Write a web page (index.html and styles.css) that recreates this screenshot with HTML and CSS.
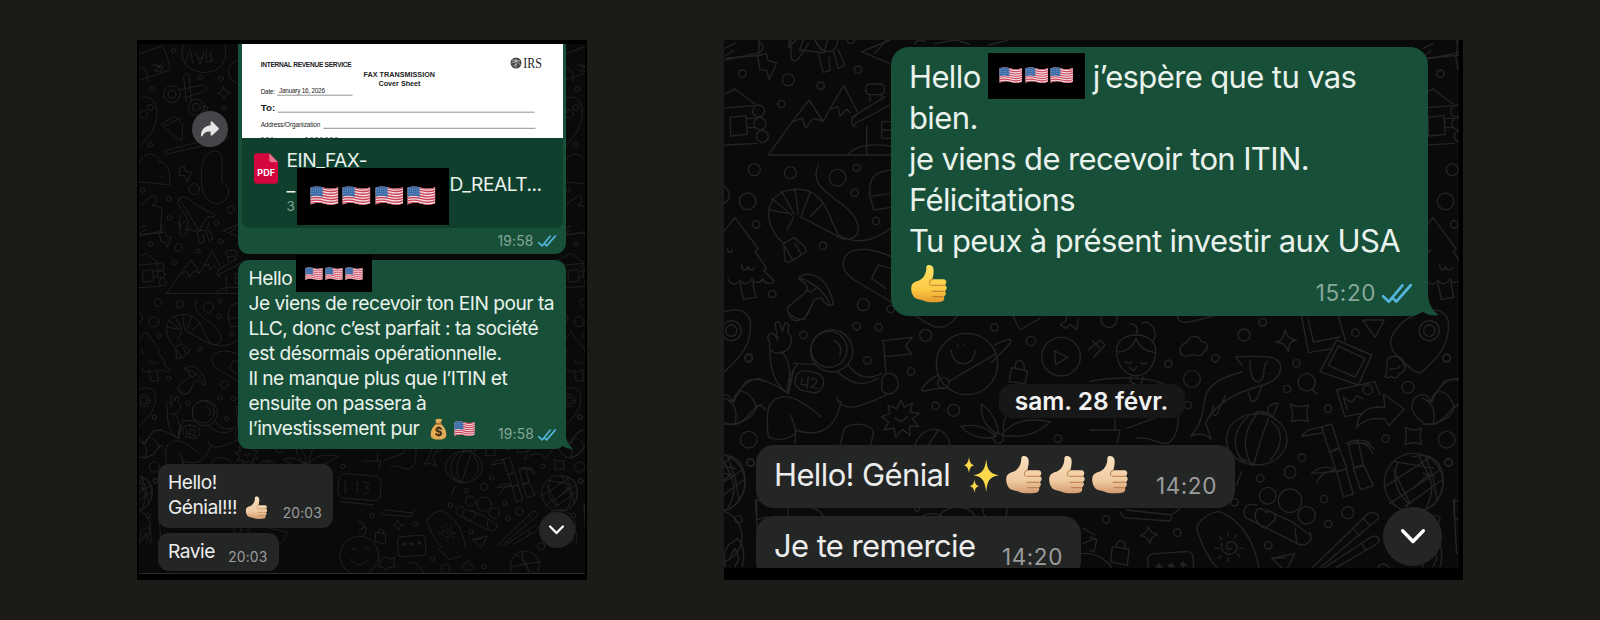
FILE: index.html
```html
<!DOCTYPE html>
<html lang="fr">
<head>
  <meta charset="UTF-8" />
  <meta name="viewport" content="width=device-width, initial-scale=1.0"/>
  <title>Témoignages</title>
  <link rel="stylesheet" href="styles.css">
</head>
<body>

  <!-- Shared shapes -->
  <svg class="defs" width="0" height="0">
    <defs>
      <linearGradient id="yellow" x1="0" y1="0" x2="0" y2="1">
        <stop offset="0" stop-color="#ffe066"/><stop offset=".65" stop-color="#fccb45"/><stop offset="1" stop-color="#e39a2c"/>
      </linearGradient>
      <linearGradient id="skin" x1="0" y1="0" x2="0" y2="1">
        <stop offset="0" stop-color="#fae0bd"/><stop offset=".65" stop-color="#f0cba2"/><stop offset="1" stop-color="#d39b70"/>
      </linearGradient>
      <symbol id="thumb" viewBox="0 0 112 120">
        <path d="M48 8c2-8 18-7 21 4 3 12-1 24-3 34l34 0c10 1 10 14 3 17 8 3 8 15 0 18 6 4 4 14-3 17 4 5 1 14-8 15-18 3-40 3-52-3-12-5-25-3-31-14C1 84 0 63 9 57c9-6 15-5 23-11 11-9 17-23 16-38z"/>
        <path d="M66 46c-8 2-11 9-7 16M64 64h38M65 82h36M68 98h29" fill="none" stroke="#a8632f" stroke-opacity=".6" stroke-width="3.5" stroke-linecap="round"/>
      </symbol>
      <symbol id="flag" viewBox="0 0 86 60" preserveAspectRatio="none">
        <clipPath id="wave"><path d="M1 5c14-6 28-4 42 0s28 4 42-2v49c-14 6-28 5-42 1s-28-3-42 3z"/></clipPath>
        <g clip-path="url(#wave)">
          <path fill="#f3e0e4" d="M0 0h86v60H0z"/>
          <path d="M0 6c14-6 28-4 43 0s29 4 43-2M0 14c14-6 28-4 43 0s29 4 43-2M0 22c14-6 28-4 43 0s29 4 43-2M0 30c14-6 28-4 43 0s29 4 43-2M0 38c14-6 28-4 43 0s29 4 43-2M0 46c14-6 28-4 43 0s29 4 43-2M0 54c14-6 28-4 43 0s29 4 43-2" fill="none" stroke="#cf4358" stroke-width="4.2"/>
          <path fill="#3d6da8" d="M0 0h38v33c-14-5-26-4-38 0z"/>
          <path d="M4 9h32M4 16h32M4 23h32" stroke="#a9c3de" stroke-width="2" stroke-dasharray="2 4"/>
        </g>
      </symbol>
      <symbol id="bag" viewBox="0 0 50 64">
        <path fill="#e3ab55" d="M15 3c5 3 8-3 11 0 4-3 6 2 10 0l-5 13c10 8 17 19 17 32 0 12-9 15-23 15S2 60 2 48c0-13 7-24 17-32z"/>
        <path stroke="#8d5c22" stroke-width="4" stroke-linecap="round" d="M17 17h16"/>
        <text x="25" y="54" text-anchor="middle" class="dollar">$</text>
      </symbol>
      <symbol id="sparkles" viewBox="0 0 104 106">
        <g fill="#fcd94a">
          <path d="M66 6c3 30 8 42 38 48-30 5-35 18-38 50-4-32-9-45-38-50 29-6 34-18 38-48z"/>
          <path d="M15 0c2 14 4 20 15 24-11 4-13 9-15 23C12 33 10 28 0 24 10 20 12 14 15 0zM31 66c2 12 4 17 14 20-10 3-12 8-14 20-2-12-4-17-14-20 10-3 12-8 14-20z"/>
        </g>
      </symbol>
      <symbol id="ticks" viewBox="0 0 88 56">
        <path d="M3 36l17 16L60 4M33 43l9 9L85 3" fill="none" stroke="#53b4dc" stroke-width="8" stroke-linecap="round" stroke-linejoin="round"/>
      </symbol>
      <symbol id="chevron" viewBox="0 0 68 42">
        <path d="M5 5l29 30L63 5" fill="none" stroke="#fff" stroke-width="10" stroke-linecap="round" stroke-linejoin="round"/>
      </symbol>

      <!-- One tile of the doodle wallpaper, repeated every 2094 units -->
      <g id="tile">
        <!-- cabin, mountains, shrimp, tree -->
        <path d="M-30 220l90-43 60 45M-40 240l155-13M-40 350l165-10M45 262l48-5 4 56-50 5zM98 265h25M98 293h22"/>
        <circle cx="131" cy="243" r="18"/><circle cx="135" cy="281" r="18"/><circle cx="142" cy="319" r="18"/>
        <path d="M128 78l26-8 5 22 26 7-22 50-8-28-20-2zM160 375l72-100 50-65 42 64 62-108 42 80M232 275l30-10 10 30 22-30 30 8M344 238l24-8 8 28 18-20 12 10M160 375h370M400 372c30-32 80-30 130-24M410 262l100-62M412 285l113-60M455 290v80M465 215v-20M500 210v-20M500 275h30v50h-30zM500 300h28"/>
        <rect x="452" y="162" width="56" height="32" rx="13"/><path d="M425 255c-20 10-20 35 0 35"/>
        <path d="M310 405c-25 50 20 80 60 110 38 25 60 55 60 85-2 30-45 35-70 14L255 560M370 615c60 35 120 10 158-22M206 640c-60-50-60-130 0-155 65-20 115 0 145 90l20 40M206 640l4 54 15 2 48-30-2-15-34-28zM210 650l24 42M240 640l20 35M165 540l55 10M170 505l60 50M200 485l38 68M240 480l10 72M285 488l-25 68M325 520l-40 40M235 560c0 15-15 20-18 40"/>
        <path d="M-20 660l80-97 70 94-10 8 35 50-10 6 33 32c-10 12-30 8-35-6-10 15-28 12-32 0-10 18-28 18-36 4-12 18-30 12-36-4M75 760l10 48 37-6-8-45M80 705c0 18 15 18 18 4 3 14 18 14 20 2M38 655c0 16 12 16 14 4"/>
        <path d="M250 745c30-30 90-5 105 78-15 8-28-5-36-20l-20 5-30 58c-10 10-60-10-50-35l60-50-5-18zM250 745c15 0 70 20 95 78M270 780l18 6 18-14"/>
        <path d="M528 680c-50-22-85-28-120-15-35 20-30 60 10 85l220 130c30 20 65 15 90-25M470 745l20-40 38 10M470 745l42 30"/>
        <path d="M465 490c-5-50 20-65 62-70M462 490l15 50 52-8M465 500l60-10"/>
        <!-- top edge -->
        <path d="M30 90l105-22c15-15 10-25-5-35M30 55l30-15M30 78l25-15M228 30v52c8 18 20 10 25 0l28-42M310 72l15 55 20-5-3-40M355 65l15 50 20-10-20-45M300 30c20 50 70 45 68-5M440 65l85-35M440 65l85 36M480 70l35-40M660 40l60-10 45 12M820 45l60-15M600 42c0-12 20-12 30-8"/>
        <circle cx="82" cy="131" r="11"/><circle cx="220" cy="149" r="18"/><circle cx="317" cy="167" r="11"/><circle cx="429" cy="119" r="11"/><circle cx="199" cy="222" r="11"/><circle cx="118" cy="419" r="18"/><circle cx="226" cy="428" r="18"/><circle cx="368" cy="443" r="25"/><circle cx="425" cy="413" r="10"/><circle cx="98" cy="514" r="25"/><circle cx="15" cy="495" r="28"/><circle cx="419" cy="488" r="11"/><circle cx="124" cy="583" r="11"/><circle cx="483" cy="573" r="11"/><circle cx="324" cy="647" r="11"/><circle cx="172" cy="792" r="11"/><circle cx="445" cy="824" r="18"/><circle cx="527" cy="837" r="11"/>

        <!-- lower left -->
        <g transform="translate(0 840)">
          <path d="M165 100c-15-20 0-40 15-25l8 15-8-50c8-10 16-5 22 25l8-26c12-2 15 10 8 30 18 5 18 60-30 60-20 0-28-15-23-29zM165 120c0 70 20 110 55 130l15-65M200 125c20 18 30 55 22 120M235 160l65 3M250 160c-30 30-35 70-30 90M30 265l20 10 45-62c40-15 85 10 125 38M55 272c10-45 50-30 68 15 0 40-60 60-92 55M120 290l15-5 18 15M160 380c-10-80 0-110 40-120 50 0 80 30 118 60M240 400c5-35 0-60-15-85M160 380c20 12 55 12 80-8M240 360c60 20 120 10 138-85M365 262c10 30 35 30 60 28 35-10 60-20 90-35M365 185c50 40 75 45 125 20M400 165c30 40 60 45 100 25"/>
          <circle cx="350" cy="123" r="63"/><circle cx="342" cy="118" r="54"/><path d="M358 92c22 12 22 30 16 45"/>
          <rect x="240" y="185" width="86" height="60" rx="28" transform="rotate(12 283 215)"/><path d="M262 205l-4 18 20 2M280 200l-4 36M288 208c12-8 24 4 12 14l-12 10 20 3"/>
          <path d="M500 92l92-10-20 25 18 25-80 8M505 92l8 98M500 210c10-30 45-25 50 10 0 35-40 40-50 18zM558 270l10 22 24-12-6 26 28 4-22 18 20 22-28-2 2 28-24-18-20 24-5-28-30 6 14-24-22-16 26-10-6-24 26 10zM540 325l18 10 20-15"/>
          <circle cx="756" cy="162" r="92"/><path d="M840 105c60-30 55-15 30 12l-40 40M670 195c-40 20-60 50-45 48l60-10M700 215l145-85M708 120c5 55 70 55 72 2M728 105v3M748 102v3"/><circle cx="685" cy="219" r="17"/>
          <path d="M882 215l8-42 48 10-8 38zM900 175c0-35 30-30 28 4"/>
          <circle cx="1038" cy="140" r="58"/><path d="M1018 122l40 20-36 22z"/>
          <path d="M738 350c50-12 80 5 106 30-40 10-80 0-106-30zM800 282c30 20 50 60 50 90-35-15-55-50-50-90zM860 375c40-50 90-50 145-40-40 40-90 50-145 40zM865 362c-2-35 15-60 30-75M375 405l12-45c10-28 90-20 88 10l-8 35M600 405c20-60 95-65 105 0M640 405l30-45"/><circle cx="850" cy="385" r="15"/>
          <path d="M220 10c10 35 50 25 65-10M895 20l20 40 60-35M1035 45l20-15-5-30M1035 45l20 10 10-12 20 15 5-30"/>
          <path d="M0 440c60-15 90 20 90 70s-30 100-90 90M30 490l30 10 12 70M0 535l50-45M38 440l20 55M125 570l95 20-5 80M125 570v60l30-10M30 770c-10-80 30-70 36-85 20 15 25 50 15 85M45 740l15-25 12 30-12 25M280 590c20 5 40 15 45 30M670 620c25-35 90-40 110 0M600 590c0 20 10 20 15 0M500 620h80M1105 655l35 20M1105 700l35-15"/>
          <circle cx="101" cy="389" r="25"/><circle cx="106" cy="457" r="11"/><circle cx="70" cy="628" r="11"/><circle cx="101" cy="143" r="11"/><circle cx="265" cy="75" r="11"/><circle cx="425" cy="49" r="11"/><circle cx="491" cy="52" r="11"/><circle cx="632" cy="76" r="18"/><circle cx="457" cy="151" r="11"/><circle cx="588" cy="184" r="11"/><circle cx="662" cy="287" r="11"/><circle cx="716" cy="301" r="18"/><circle cx="839" cy="52" r="11"/><circle cx="948" cy="93" r="14"/><circle cx="1029" cy="386" r="11"/>
        </g>

        <!-- lower right -->
        <g transform="translate(1125 840)">
          <path d="M80 120c0-60 115-60 117 0 0 40-20 75-58 78-38-3-60-38-59-78zM80 125c25 5 50-15 58-40 8 25 30 40 55 42M120 42c30 0 20 25 18 33M155 40c30-15 50 30 35 52M105 155c8 5 15 5 20 0M150 158c8 5 15 5 20 0M118 170c8 15 15 15 22 0M125 195l-5 20 30 15 10-30M0 215c60-15 200-20 240 20 30 50 35 130 0 160-20 20-60-20-100-10M0 360h90l-8 38M110 355l95-35v-100M75 320v40"/>
          <path d="M270 125c0-25 15-25 22-28 0-20 35-25 42-2 20 0 25 20 8 30-8 18-25 12-35 8-15 10-35 5-37-8zM-5 120l35-30 15 15-35 38M8 92l20 22"/>
          <circle cx="57" cy="28" r="24"/><path d="M260 15c10 30 15 30 120 0"/>
          <path d="M437 140c70 0 130-10 135 30 0 50-60 55-100 70-60 20-110 60-125 100l17 48c-20-20-40-20-62-10 40-45 35-80 45-120 10-40 60-60 110-72M437 140l20 28M480 150c0 70 20 70 34 60 15-15 0-40 18-55M475 245l8 30c20 0 20-20 32-45M370 290c-10 30 5 30 12 20l25-55"/><path d="M538 190h3"/>
          <path d="M585 58c5 20 12 28 34 32-20 5-22 12-24 34-8-20-15-25-38-28 20-6 26-14 28-38zM635 18l20 110 70-12M655 28l15 68 80-15M745 18l22 75"/>
          <path d="M740 90l105 45-40 90-115-40zM745 108l80 38-30 55-80-35zM740 240l115-25 15 40M740 240l25 80 50-10M760 262l12 38M760 262l25 15 15-20 20 10M818 30l65 0-28 52z"/>
          <path d="M800 352c5-50 40-65 85-60l-5-40 62 45-45 50-12-20c-35-5-60 0-85 25z"/>
          <circle cx="650" cy="217" r="26"/><path d="M665 238l18 15"/>
          <path d="M905 110c-15-30 30-80 70-95 50-25 90-20 100 20 5 60-20 100-80 152-20 10-90-60-90-77zM885 200c10-10 0-20 8-30-10-20 10-35 22-30 10-5 32 10 24 22 15 10 0 28-10 28-5 18-20 15-25 8-10 8-18 5-19 2zM900 178c8-6 22 4 30-10"/><circle cx="1018" cy="62" r="30"/><circle cx="1018" cy="62" r="17"/>
          <path d="M965 295c0-40 30-45 45-38l15 20c20-50 50-75 82-70M965 295c20 50 60 60 85 38 30-20 30-40 60-50M1008 270c30 20 25 50 22 70"/>
          <ellipse cx="500" cy="388" rx="91" ry="77"/><path d="M475 318c-50 45-50 100-12 140M500 312c-40 50-45 100-15 155M535 325c-15 40-30 90-45 140M545 335c40 30 30 80-5 115M490 315c10-20 60-5 65 15M450 445l45 18M535 308c-10-20 15-30 30-28-10 15-5 22-15 32M455 485l-15 40"/>
          <path d="M600 282c20 10 30 10 55 3-8 20-5 30 0 50-18-8-30-5-50 0 5-20 5-35-5-53zM945 352c20 10 30 10 50 3-8 20-5 30 0 48-18-8-30-5-50 0 5-20 5-35 0-51z"/>
          <path d="M695 350l30-8 22 70-28 15zM720 427l28-12 22 60-30 12zM740 485l28-8 22 75-30 8zM635 380c15-25 40-25 62-28M640 378l60-10M665 490c20-20 45-20 65-15M680 520c10-30 30-35 55-40M665 490l70-5M775 405l30-10 15 70-28 8zM790 475l32-8 28 60-38 12zM770 400c15-10 50-15 70 0M800 400c30-5 40 15 48 30M800 398c40 0 45 10 52 20"/>
          <circle cx="971" cy="518" r="88"/><path d="M915 455l115 20M885 530l130-85M900 580l150-100M945 590l110-80M925 455c-20 40-10 90 30 125M985 435c30 60 60 90 25 155M910 480l50 100"/>
          <circle cx="533" cy="557" r="25"/><circle cx="600" cy="572" r="35"/><circle cx="650" cy="616" r="26"/><path d="M500 585c-40-10-50 30-25 42l150 75c30 10 45-15 35-35M500 600c10-10 25 0 27 8 15-10 35 5 28 22l-30 25c-15-5-40-30-25-55zM530 600l75 35 55 40M615 655l5 42"/>
          <path d="M320 655c5-30 50-50 70-50 60 25 110 90 118 185M320 655c15 50 30 85 70 130M425 715c-10 8-22-4-12-15 15-14 35 5 25 22-15 22-52 8-42-22M415 668v10M440 675l-5 8M460 715h-12M450 740l-8-8M415 755v-12M385 745l8-8M375 715h12M388 680l8 8"/>
          <path d="M665 775l160-155c20-25 50-5 38 8l-175 147M700 775l130-85c30-25 48 0 30 12l-120 70M790 655l18 22M820 625l18 20M815 700l12 20"/>
          <path d="M90 605l10 18 140 10 5-12M110 600l135 15 25-20M62 755l5-45 50 8-5 48zM80 712c0-30 28-25 25 3M175 650c5 18 15 22 28 24-18 5-20 12-24 26-5-15-12-20-28-24 16-5 20-12 24-26zM545 745l70-15-28 55zM545 745l42-2M0 680l20 10-8 35-12-4"/>
          <rect x="175" y="728" width="136" height="100" rx="18" transform="rotate(-4 243 778)"/><path d="M208 760v18M200 766l16 6M216 766l-16 6M243 758v18M235 764l16 6M251 764l-16 6M280 755v18M272 761l16 6M288 761l-16 6"/>
          <circle cx="518" cy="37" r="11"/><circle cx="462" cy="75" r="18"/><circle cx="376" cy="145" r="11"/><circle cx="235" cy="161" r="11"/><circle cx="306" cy="207" r="25"/><circle cx="294" cy="285" r="11"/><circle cx="619" cy="160" r="11"/><circle cx="591" cy="237" r="11"/><circle cx="796" cy="68" r="11"/><circle cx="833" cy="239" r="14"/><circle cx="714" cy="296" r="11"/><circle cx="954" cy="232" r="18"/><circle cx="1070" cy="145" r="11"/><circle cx="887" cy="386" r="11"/><circle cx="1076" cy="458" r="11"/><circle cx="636" cy="443" r="11"/><circle cx="600" cy="486" r="18"/><circle cx="511" cy="505" r="11"/><circle cx="434" cy="577" r="11"/><circle cx="702" cy="567" r="11"/><circle cx="773" cy="608" r="18"/><circle cx="715" cy="642" r="11"/><circle cx="535" cy="706" r="11"/><circle cx="262" cy="668" r="11"/><circle cx="48" cy="628" r="11"/>
          <circle cx="970" cy="680" r="80"/>
        </g>

        <!-- below the fold: smiley, basketball, clock -->
        <g transform="translate(1125 840)">
          <circle cx="-15" cy="825" r="95"/><path d="M-60 840c20 40 70 40 90 0M-55 800c10-15 20-10 25 0M5 795c10-15 20-10 25 0M90 845l20-15 25 12 25-8-8 28 10 20-30 2-12 15-15-15-25-4 10-18z"/>
          <circle cx="800" cy="875" r="72"/><path d="M750 820c60 20 80 80 60 125M730 880l145-25M790 805c-10 50 10 90 70 110M1090 570l10 160M370 785l60 60 60-20M230 860c30-10 60 20 80 70M500 870c10-20 30-20 30 0 25 5 20 25-5 28-35 0-40-15-25-28z"/>
          <circle cx="345" cy="840" r="11"/><circle cx="410" cy="890" r="22"/><circle cx="880" cy="780" r="18"/><circle cx="600" cy="880" r="11"/>
        </g>
        <g transform="translate(0 840)">
          <path d="M760 450l12 60M740 470l60-20M745 560c30-20 40-50 45-90M750 500c20 20 40 35 70 50M850 560l50-120 55 110M870 520h60"/>
          <path d="M1010 450c0-25 20-30 40-28l140 12c25 5 30 25 28 50l-5 50c-5 20-25 20-40 20l-140-12c-25-5-30-25-28-45zM1020 560l160 15M1040 460v60M1075 470h4M1075 500h4M1100 460v60M1130 465c35-8 30 20 10 25 30 5 20 35-12 28"/>
          <path d="M560 700c30-80 90-120 150-60l-45 50 90 20c-15 60-60 80-110 60zM810 580c10-30 50-20 50 0 25 10 20 45-10 50-30 10-60-20-40-50z"/><circle cx="510" cy="700" r="18"/><circle cx="400" cy="760" r="11"/>
        </g>

        <!-- upper band: lanterns, spinner, taco, plane -->
        <g transform="translate(-17 -898) scale(1.638)" stroke-width="2.6">
          <path d="M90 25c15 20 30 60 28 80L30 135M20 60l70-25M65 90l35 5-8 16-20-4M75 85l22 22M97 85l-22 22M20 95c25 0 35 20 32 45M155 60c0-25 5-30 15-40M282 20c10 30 5 70-25 85-40 20-100 0-102-45M178 45c8 10 5 25 10 40M195 52l14 35 12-35M205 70h14M228 48v35l20-5M240 50l5 30M165 85l8-30"/>
          <circle cx="125" cy="178" r="25"/><circle cx="125" cy="178" r="12"/><circle cx="198" cy="217" r="24"/><circle cx="198" cy="217" r="12"/><path d="M165 120c5-5 12-3 12 3l5 75M148 165l70-15c14 0 14 15 5 20l-65 20M160 125l8 75M280 155c3 12 8 16 22 18-14 5-17 8-20 20-4-12-8-16-20-18 12-6 15-10 18-20z"/>
          <circle cx="330" cy="110" r="35"/><path d="M30 190c20-10 50 0 50 45-5 60-30 70-50 100M95 268l38-25 24 28-2 45-15-5zM100 275l50-25M105 348l180-48c15 0 10 15 0 18l-175 40c-10 0-10-8-5-10zM225 365c20-25 45-20 50 5v70c20 10 30 40 5 60-35 20-60-10-64-40-5-40-5-70 9-95zM27 385c10-35 50-35 60-5 30 5 35 40 30 70l-90-8"/><circle cx="40" cy="238" r="12"/><circle cx="60" cy="218" r="9"/>
          <path d="M150 400l12-5 3 15 20 2-15 30-5-18-18-2zM30 510l35-25c20-15 15 30 0 25l30 10-5 75-60 5M145 510c-10-30 30-30 50 0l50 25c20 15 0 15-10 10l-20 25-5 20-45-5 10-25zM145 490l60 95M150 540l-5 40 25-25"/>
          <path d="M95 405h1M105 412h1M90 425h1M102 428h1"/>
          <circle cx="130" cy="47" r="7"/><circle cx="65" cy="163" r="7"/><circle cx="210" cy="128" r="7"/><circle cx="272" cy="131" r="7"/><circle cx="60" cy="330" r="7"/><circle cx="192" cy="463" r="16"/><circle cx="37" cy="466" r="7"/><circle cx="116" cy="492" r="7"/><circle cx="118" cy="550" r="7"/><circle cx="302" cy="525" r="11"/><circle cx="259" cy="566" r="7"/><circle cx="225" cy="220" r="7"/><circle cx="282" cy="218" r="7"/>
        </g>
      </g>
      <g id="wallpaper" fill="none" stroke="#242424" stroke-width="4.2" stroke-linecap="round" stroke-linejoin="round">
        <use href="#tile" x="-2094"/>
        <use href="#tile"/>
        <use href="#tile" x="2094"/>
      </g>
    </defs>
  </svg>

  <main class="shots">

    <!-- EIN conversation -->
    <section class="shot shot-ein">
      <div class="chat">
        <svg class="wallpaper" viewBox="139 44 446 530"><g transform="translate(133.4 217.7) scale(.2035)"><use href="#wallpaper"/></g></svg>

        <div class="bubble out doc">
          <div class="card">
            <svg class="fax" viewBox="242 44 321 94">
              <path fill="#fff" d="M242 44h321v94H242z"/>
              <g class="fax-text">
                <text class="b" x="260.7" y="67.4" font-size="6.6" textLength="91">INTERNAL REVENUE SERVICE</text>
                <text class="b" x="363.5" y="77.2" font-size="7.2" textLength="71.5">FAX TRANSMISSION</text>
                <text class="b" x="378.5" y="86.2" font-size="7.2" textLength="42">Cover Sheet</text>
                <text x="260.7" y="93.9" font-size="6.4" textLength="14.5">Date:</text>
                <text x="279" y="93.4" font-size="6.4" textLength="46">January 16, 2026</text>
                <text class="b" x="260.7" y="111" font-size="9" textLength="14.5" lengthAdjust="spacingAndGlyphs">To:</text>
                <text x="260.7" y="127.2" font-size="6.4" textLength="59.5">Address/Organization</text>
                <text class="irs" x="523.3" y="68" font-size="14.5" textLength="18.5" lengthAdjust="spacingAndGlyphs">IRS</text>
              </g>
              <path d="M277 95.2h75.500M278 112.200h256.500M323.500 128.300h212" stroke="#777" stroke-width=".8"/>
              <path d="M261 137.500h12M305 137.500h35" stroke="#999" stroke-width="1" stroke-dasharray="3 2"/>
              <circle cx="516" cy="63" r="5.500" fill="#444"/>
              <path d="M512 60l8 1M511.500 63l5-2 4 4M513 66l4-2M516 58.500v9" stroke="#ccc" stroke-width=".8" fill="none"/>
            </svg>
            <div class="file">
              <svg class="pdf" viewBox="0 0 72 92">
                <path fill="#d3063d" d="M10 0h36l26 27v55a10 10 0 0 1-10 10H10A10 10 0 0 1 0 82V10A10 10 0 0 1 10 0z"/>
                <path fill="#e8728f" d="M46 0l26 27H52a6 6 0 0 1-6-6z"/>
                <text x="10" y="69" textLength="53" lengthAdjust="spacingAndGlyphs">PDF</text>
              </svg>
              <div class="file-name">
                <div>EIN_FAX-</div>
                <div class="row"><span>_</span><span>D_REALT...</span></div>
                <small>3</small>
              </div>
            </div>
            <div class="mask mask-file">
              <svg><use href="#flag"/></svg><svg><use href="#flag"/></svg><svg><use href="#flag"/></svg><svg><use href="#flag"/></svg>
            </div>
          </div>
          <div class="meta">19:58<svg class="ticks"><use href="#ticks"/></svg></div>
        </div>

        <div class="bubble out tail msg-ein">
          <p>Hello</p>
          <p>Je viens de recevoir ton EIN pour ta</p>
          <p>LLC, donc c’est parfait : ta société</p>
          <p>est désormais opérationnelle.</p>
          <p>Il ne manque plus que l’ITIN et</p>
          <p>ensuite on passera à</p>
          <p>l’investissement pur <svg class="bag"><use href="#bag"/></svg><svg class="flag"><use href="#flag"/></svg><span class="meta">19:58<svg class="ticks"><use href="#ticks"/></svg></span></p>
          <div class="mask mask-name">
            <svg><use href="#flag"/></svg><svg><use href="#flag"/></svg><svg><use href="#flag"/></svg>
          </div>
        </div>

        <div class="bubble in msg-hello">
          <p>Hello!</p>
          <p>Génial!!! <svg class="thumb" fill="url(#skin)"><use href="#thumb"/></svg><span class="meta">20:03</span></p>
        </div>
        <div class="bubble in msg-ravie">
          <p>Ravie <span class="meta">20:03</span></p>
        </div>

        <div class="round share">
          <svg viewBox="0 0 54 46"><path fill="#e6e6e6" d="M29 3c0-3 3-4 5-2l18 18c2 2 2 4 0 6L34 42c-2 2-5 1-5-2v-9C17 30 9 34 4 44c-2 3-4 1-4-2C1 24 11 14 29 12z"/></svg>
        </div>
        <div class="round down"><svg><use href="#chevron"/></svg></div>
      </div>
    </section>

    <!-- ITIN conversation -->
    <section class="shot shot-itin">
      <div class="chat">
        <svg class="wallpaper" viewBox="724 40 735 528"><g transform="translate(715 30) scale(.33333)"><use href="#wallpaper"/></g></svg>

        <div class="bubble out tail msg-itin">
          <p>Hello <span class="mask mask-inline"><svg><use href="#flag"/></svg><svg><use href="#flag"/></svg><svg><use href="#flag"/></svg></span>j’espère que tu vas</p>
          <p>bien.</p>
          <p>je viens de recevoir ton ITIN.</p>
          <p>Félicitations</p>
          <p>Tu peux à présent investir aux USA</p>
          <p><svg class="thumb" fill="url(#yellow)"><use href="#thumb"/></svg><span class="meta">15:20<svg class="ticks"><use href="#ticks"/></svg></span></p>
        </div>

        <div class="date">sam. 28 févr.</div>

        <div class="bubble in msg-genial">
          <p>Hello! Génial <svg class="sparkles"><use href="#sparkles"/></svg><svg class="thumb" fill="url(#skin)"><use href="#thumb"/></svg><svg class="thumb" fill="url(#skin)"><use href="#thumb"/></svg><svg class="thumb" fill="url(#skin)"><use href="#thumb"/></svg><span class="meta">14:20</span></p>
        </div>
        <div class="bubble in msg-merci">
          <p>Je te remercie <span class="meta">14:20</span></p>
        </div>

        <div class="round down"><svg><use href="#chevron"/></svg></div>
      </div>
    </section>

  </main>
</body>
</html>
```
FILE: styles.css
```css
* {
  box-sizing: border-box;
}

body {
  margin: 0;
  height: 620px;
  background: #1d1b17;
  font-family: Inter, "Liberation Sans", sans-serif;
  overflow: hidden;
}

.defs {
  position: absolute;
}

.shots {
  display: flex;
  gap: 137px;
  padding: 40px 137px;
}

.shot {
  flex: none;
  height: 540px;
  background: #000;
}

.shot-ein {
  width: 450px;
  padding: 4px 2px 6px;
}

.shot-itin {
  width: 739px;
  padding: 0 4px 12px 0;
}

.chat {
  position: relative;
  display: flex;
  flex-direction: column;
  height: 100%;
  overflow: hidden;
  background: #0a0a0a;
}

.shot-ein .chat {
  border-bottom: 1px solid #2b2b2b;
}

.wallpaper {
  position: absolute;
  left: 0;
  top: 0;
  width: 100%;
  height: 100%;
}

/* Bubbles */
.bubble {
  position: relative;
  flex: none;
  color: #e9f2ec;
}

.out {
  align-self: flex-end;
  background: #184f39;
}

.in {
  align-self: flex-start;
  background: #242626;
  color: #ececec;
}

.bubble p {
  display: flex;
  align-items: center;
  margin: 0;
  white-space: pre;
}

.meta {
  display: flex;
  align-items: center;
  margin-left: auto;
  color: #86a899;
}

.in .meta {
  color: #9b9c9c;
}

.tail::after {
  content: "";
  position: absolute;
  bottom: 0;
  background: #184f39;
}

.mask {
  display: flex;
  background: #000;
}

/* EIN conversation */
.shot-ein .bubble {
  border-radius: 11px;
  font-size: 19.2px;
  letter-spacing: -0.5px;
}

.shot-ein .bubble p {
  height: 25.15px;
  line-height: 25.15px;
}

.shot-ein .out {
  width: 328px;
  margin-right: 19px;
}

.shot-ein .meta {
  font-size: 13.8px;
  letter-spacing: 0.2px;
  gap: 4px;
}

.shot-ein .ticks {
  width: 18px;
  height: 12px;
}

.shot-ein .doc {
  height: 210px;
  padding: 0 3.500px;
  border-radius: 0 0 11px 11px;
}

.card {
  position: relative;
  height: 184px;
  background: #0f3f2d;
  border-radius: 0 0 8px 8px;
}

.fax {
  display: block;
  width: 321px;
  height: 94px;
}

.fax-text {
  font-family: "Liberation Sans", sans-serif;
  fill: #222;
  letter-spacing: 0;
}

.b {
  font-weight: bold;
}

.irs {
  font-family: "Liberation Serif", serif;
}

.file {
  display: flex;
  gap: 9px;
  padding: 10px 21px 0 12px;
}

.pdf {
  flex: none;
  width: 24px;
  height: 31px;
  margin-top: 5px;
}

.pdf text {
  font-size: 25px;
  font-weight: bold;
  fill: #fff;
  letter-spacing: 0;
}

.file-name {
  flex: 1;
  padding-top: 1px;
  line-height: 23.600px;
}

.file-name .row {
  display: flex;
  justify-content: space-between;
}

.file-name small {
  display: block;
  font-size: 13.5px;
  line-height: 20px;
  color: #84a596;
}

.mask-file {
  position: absolute;
  left: 55.500px;
  top: 124px;
  width: 151.500px;
  height: 57px;
  padding: 18px 13px;
  gap: 3.500px;
}

.mask-file svg {
  width: 29px;
  height: 20px;
}

.doc > .meta {
  justify-content: flex-end;
  height: 26px;
  padding-right: 7px;
}

.msg-ein {
  height: 189.500px;
  margin-top: 5.500px;
  padding: 6px 10px 0 10.500px;
}

.msg-ein .meta {
  padding-top: 12px;
}

.mask-name {
  position: absolute;
  left: 58px;
  top: -4.500px;
  width: 76px;
  height: 37px;
  padding: 12px 9px;
  gap: 2px;
}

.mask-name svg {
  width: 19px;
  height: 14px;
}

.bag {
  width: 17px;
  height: 22px;
  margin-left: 6px;
}

.dollar {
  font-size: 34px;
  font-weight: bold;
  fill: #3d2a10;
}

.flag {
  width: 21px;
  height: 16px;
  margin-left: 7px;
}

.shot-ein .tail::after {
  right: -7px;
  width: 14px;
  height: 14px;
  clip-path: path("M7 0C7 6 10 11 14 13.5C10 14.3 6 13 3 10.5z");
}

.shot-ein .in {
  margin-left: 19px;
  padding: 6px 11px 0 10px;
}

.shot-ein .in .meta {
  padding-top: 11px;
}

.msg-hello {
  width: 175px;
  height: 64px;
  margin-top: 15px;
}

.msg-hello .thumb {
  width: 23px;
  height: 24px;
  margin-left: 3px;
}

.msg-ravie {
  width: 120.500px;
  height: 38px;
  margin-top: 5px;
}

.round {
  position: absolute;
  display: flex;
  align-items: center;
  justify-content: center;
  border-radius: 50%;
  background: #242626;
}

.shot-ein .round {
  width: 36px;
  height: 36px;
}

.share {
  left: 53px;
  top: 67px;
  background: #454649;
}

.share svg {
  width: 18px;
  height: 16px;
}

.shot-ein .down {
  right: 10.500px;
  bottom: 25px;
}

.shot-ein .down svg {
  width: 15px;
  height: 10px;
}

/* ITIN conversation */
.shot-itin .bubble {
  border-radius: 18px;
  font-size: 31px;
  letter-spacing: -0.62px;
}

.shot-itin .bubble p {
  height: 40.950px;
  line-height: 40.950px;
}

.shot-itin .meta {
  font-size: 22.5px;
  letter-spacing: 0.6px;
  gap: 6px;
}

.shot-itin .ticks {
  width: 30px;
  height: 19px;
}

.msg-itin {
  width: 537px;
  height: 268.500px;
  margin: 7px 31px 0 0;
  padding: 10px 16px 0 18px;
}

.msg-itin .meta {
  padding-top: 22px;
}

.mask-inline {
  width: 97px;
  height: 46px;
  margin: -2px 8px 0 -1px;
  padding: 14px 11px;
  gap: 2.500px;
}

.mask-inline svg {
  width: 24px;
  height: 17px;
}

.shot-itin .thumb {
  width: 38px;
  height: 40px;
  margin-left: 1px;
}

.msg-itin .thumb {
  margin-top: 3px;
}

.shot-itin .tail::after {
  right: -11px;
  width: 23px;
  height: 22px;
  clip-path: path("M12 0C12 9 16 17 23 21.5C17 23 10 21 5 17z");
}

.date {
  position: relative;
  align-self: center;
  width: 186px;
  height: 34px;
  margin-top: 68px;
  border-radius: 13px;
  background: #171717;
  color: #f2f2f2;
  font-size: 24.5px;
  font-weight: 600;
  line-height: 34px;
  text-align: center;
}

.shot-itin .in {
  margin-left: 32px;
  padding: 10px 18px 0;
}

.shot-itin .in .meta {
  padding-top: 21px;
}

.msg-genial {
  width: 479px;
  height: 63px;
  margin-top: 27.500px;
}

.msg-genial .thumb + .thumb {
  margin-left: 5px;
}

.sparkles {
  width: 35px;
  height: 36px;
  margin: 0 5px 0 6px;
}

.msg-merci {
  width: 325px;
  height: 63px;
  margin-top: 8px;
}

.shot-itin .down {
  right: 17px;
  bottom: 2px;
  width: 59px;
  height: 59px;
}

.shot-itin .down svg {
  width: 24px;
  height: 15px;
}
```
